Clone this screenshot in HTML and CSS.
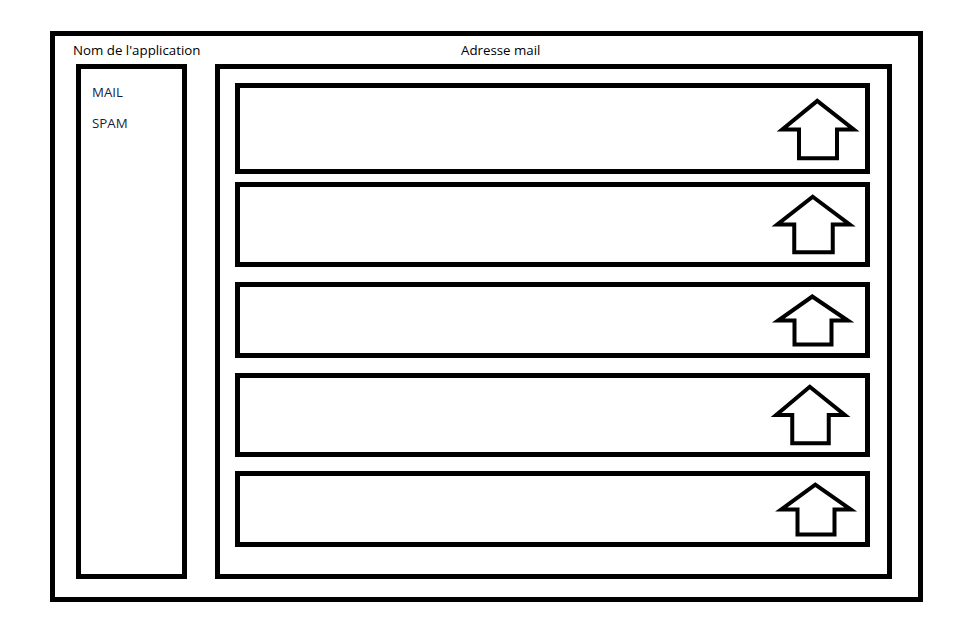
FILE: index.html
```html
<!DOCTYPE html>
<html lang="fr">
<head>
    <meta charset="UTF-8">
    <meta name="viewport" content="width=device-width, initial-scale=1.0">
    <title>Maquette boîte mail</title>
    <link rel="stylesheet" href="styles.css">
</head>
<body>
    <div class="frame">
        <div class="side-col">
            <div class="col-title side-title">Nom de l'application</div>
            <div class="sidebar">
                <div class="side-item">MAIL</div>
                <div class="side-item">SPAM</div>
            </div>
        </div>

        <div class="main-col">
            <div class="col-title main-title">Adresse mail</div>
            <div class="mail-box">
                <div class="mail-row">
                    <svg class="arrow" viewBox="0 0 100 100" preserveAspectRatio="none"><polygon points="49,3 97,50 75,50 75,97 25,97 25,50 3,50"/></svg>
                </div>
                <div class="mail-row">
                    <svg class="arrow" viewBox="0 0 100 100" preserveAspectRatio="none"><polygon points="49,3 97,50 75,50 75,97 25,97 25,50 3,50"/></svg>
                </div>
                <div class="mail-row">
                    <svg class="arrow" viewBox="0 0 100 100" preserveAspectRatio="none"><polygon points="49,3 97,50 75,50 75,97 25,97 25,50 3,50"/></svg>
                </div>
                <div class="mail-row">
                    <svg class="arrow" viewBox="0 0 100 100" preserveAspectRatio="none"><polygon points="49,3 97,50 75,50 75,97 25,97 25,50 3,50"/></svg>
                </div>
                <div class="mail-row">
                    <svg class="arrow" viewBox="0 0 100 100" preserveAspectRatio="none"><polygon points="49,3 97,50 75,50 75,97 25,97 25,50 3,50"/></svg>
                </div>
            </div>
        </div>
    </div>
</body>
</html>
```

FILE: styles.css
```css
body {
    margin: 0;
    padding: 31px 0 0 50px;
    font-family: "Open Sans", Arial, sans-serif;
    font-size: 13.3px;
    color: #000000;
    background-color: #ffffff;
}

.frame {
    display: flex;
    gap: 28px;
    width: 873px;
    box-sizing: border-box;
    border: 5px solid #000000;
    padding: 0 26px 18px 21px;
}

.side-col {
    width: 111px;
}

.main-col {
    width: 677px;
}

.col-title {
    height: 28px;
    box-sizing: border-box;
    padding-top: 5px;
    line-height: 18px;
    white-space: nowrap;
}

.side-title {
    margin-left: -3px;
}

.main-title {
    padding-left: 246px;
}

.sidebar {
    height: 515px;
    box-sizing: border-box;
    border: 5px solid #000000;
    padding: 14px 0 0 11px;
}

.side-item {
    line-height: 18px;
    color: #1a1f3a;
    margin-bottom: 13px;
}

.mail-box {
    height: 515px;
    box-sizing: border-box;
    border: 5px solid #000000;
    padding: 14px 17px 0 15px;
    display: flex;
    flex-direction: column;
}

.mail-row {
    flex-shrink: 0;
    box-sizing: border-box;
    border: 5px solid #000000;
    display: flex;
    justify-content: flex-end;
    align-items: center;
}

.arrow {
    display: block;
    overflow: visible;
}

.arrow polygon {
    fill: #ffffff;
    stroke: #000000;
    stroke-width: 4px;
    vector-effect: non-scaling-stroke;
}

.mail-row:nth-child(1) {
    height: 91px;
    padding-right: 9px;
}

.mail-row:nth-child(1) .arrow {
    width: 76px;
    height: 61px;
    margin-top: 2px;
}

.mail-row:nth-child(2) {
    height: 85px;
    margin-top: 8px;
    padding-right: 13px;
}

.mail-row:nth-child(2) .arrow {
    width: 77px;
    height: 59px;
}

.mail-row:nth-child(3) {
    height: 76px;
    margin-top: 15px;
    padding-right: 15px;
}

.mail-row:nth-child(3) .arrow {
    width: 74px;
    height: 51px;
}

.mail-row:nth-child(4) {
    height: 84px;
    margin-top: 15px;
    padding-right: 18px;
}

.mail-row:nth-child(4) .arrow {
    width: 73px;
    height: 60px;
}

.mail-row:nth-child(5) {
    height: 76px;
    margin-top: 14px;
    padding-right: 12px;
}

.mail-row:nth-child(5) .arrow {
    width: 74px;
    height: 53px;
}
```
